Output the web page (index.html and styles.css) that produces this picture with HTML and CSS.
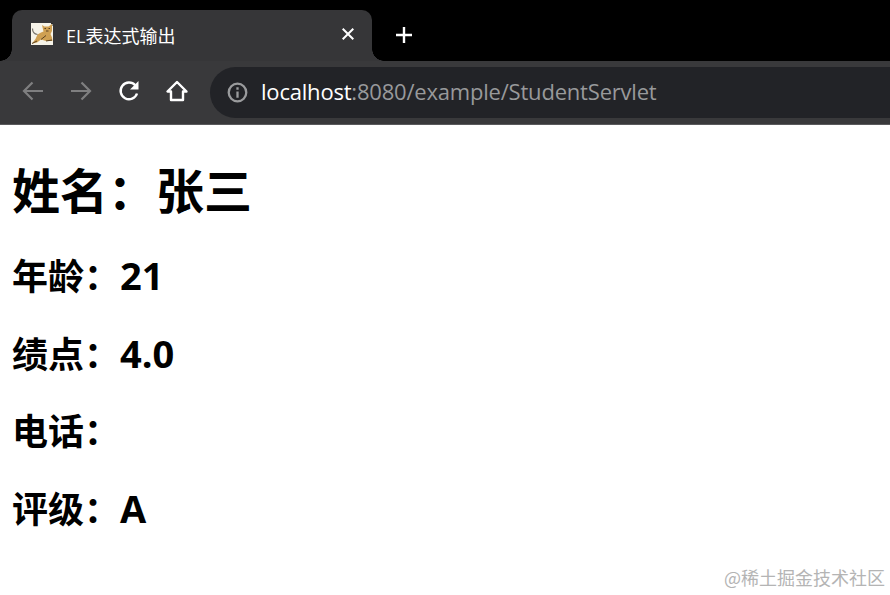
FILE: index.html
```html
<!DOCTYPE html>
<html lang="zh-CN">
<head>
    <meta charset="UTF-8">
    <meta name="viewport" content="width=device-width, initial-scale=1.0">
    <title>EL表达式输出</title>
    <link rel="stylesheet" href="styles.css">
</head>
<body>
    <div class="tab-strip">
        <div class="tab">
            <svg class="favicon" viewBox="0 0 22 22">
                <rect width="22" height="22" fill="#f6f3e8"/>
                <path d="M11 2L13.5 3.5H17.5L21 1V8L19.5 11L21 14.5L21.5 18H15L10 16.5L6 19.5L1 20.5L4.5 16L6.5 11.5L10 9.5L12.5 8.5Z" fill="#cfa052"/>
                <path d="M13.5 5.5h1.5M17.5 5.5h1.5M15 8h2.5M10 16.5l5-4M15 18l6-1M1 20.5l5-2.5" stroke="#5a4120" stroke-width="1" fill="none"/>
                <path d="M6.5 11.5C3 11 1.5 9 1.5 5.5" stroke="#77736a" stroke-width="1.2" fill="none"/>
                <path d="M20 0.5H22V3" stroke="#2a2a2a" stroke-width="1" fill="none"/>
            </svg>
            <span class="tab-title">EL表达式输出</span>
            <svg class="tab-close" viewBox="0 0 12 12">
                <path d="M0.7 0.7L11.3 11.3M11.3 0.7L0.7 11.3" stroke="#fff" stroke-width="2"/>
            </svg>
        </div>
        <svg class="new-tab" viewBox="0 0 18 18">
            <path d="M9 1V17M1 9H17" stroke="#fff" stroke-width="2.4"/>
        </svg>
    </div>

    <div class="toolbar">
        <div class="nav-buttons">
            <svg class="nav-icon" viewBox="0 0 24 24">
                <path d="M22 12H3M11.5 3.5L3 12L11.5 20.5" stroke="#7f7f80" stroke-width="2.2" fill="none"/>
            </svg>
            <svg class="nav-icon" viewBox="0 0 24 24">
                <path d="M2 12H21M12.5 3.5L21 12L12.5 20.5" stroke="#7f7f80" stroke-width="2.2" fill="none"/>
            </svg>
            <svg class="nav-icon" viewBox="0 0 24 24">
                <path d="M20 14.5A8.4 8.4 0 1 1 18.3 6.3" stroke="#fff" stroke-width="2.4" fill="none"/>
                <path d="M21.5 2V10.5H13Z" fill="#fff"/>
            </svg>
            <svg class="nav-icon" viewBox="0 0 24 24">
                <path d="M12 3L2.5 12.5H6V21H18V12.5H21.5Z" stroke="#fff" stroke-width="2.4" stroke-linejoin="round" fill="none"/>
            </svg>
        </div>
        <div class="address-bar">
            <svg class="info-icon" viewBox="0 0 22 22">
                <circle cx="11" cy="11" r="9.2" stroke="#9a9b9d" stroke-width="2.4" fill="none"/>
                <path d="M11 10V16.5M11 5.5V8" stroke="#9a9b9d" stroke-width="2.4" fill="none"/>
            </svg>
            <span class="url"><span class="url-host">localhost</span>:8080/example/StudentServlet</span>
        </div>
    </div>

    <div class="page">
        <h1>姓名：张三</h1>
        <h2>年龄：<span class="value">21</span></h2>
        <h2>绩点：<span class="value">4.0</span></h2>
        <h2>电话：</h2>
        <h2>评级：<span class="value">A</span></h2>
    </div>

    <div class="watermark">@稀土掘金技术社区</div>
</body>
</html>
```

FILE: styles.css
```css
html, body {
    margin: 0;
    height: 100%;
    overflow: hidden;
}

body {
    font-family: "Open Sans", "Noto Sans CJK SC", sans-serif;
    background-color: white;
    color: black;
}

.tab-strip {
    height: 61px;
    background-color: black;
    display: flex;
    align-items: flex-end;
    padding-left: 12px;
    box-sizing: border-box;
}

.tab {
    position: relative;
    width: 360px;
    height: 51px;
    background-color: #363638;
    border-radius: 10px 10px 0 0;
    display: flex;
    align-items: center;
    padding: 0 18px 0 19px;
    box-sizing: border-box;
}

/* concave corners at the foot of the tab */
.tab::before,
.tab::after {
    content: "";
    position: absolute;
    bottom: 0;
    width: 12px;
    height: 12px;
}

.tab::before {
    left: -12px;
    background: radial-gradient(circle at 0 0, black 11.5px, #363638 12px);
}

.tab::after {
    right: -12px;
    background: radial-gradient(circle at 100% 0, black 11.5px, #363638 12px);
}

.favicon {
    width: 22px;
    height: 22px;
    flex-shrink: 0;
    margin-bottom: 3px;
}

.tab-title {
    margin-left: 13px;
    margin-bottom: 1px;
    flex: 1;
    color: #fff;
    font-size: 18px;
}

.tab-close {
    width: 12px;
    height: 12px;
    margin-bottom: 3px;
}

.new-tab {
    width: 18px;
    height: 18px;
    margin: 0 0 17px 23px;
}

.toolbar {
    height: 64px;
    background-color: #39393b;
    border-bottom: 1px solid #5a5a5c;
    box-sizing: border-box;
    display: flex;
    align-items: center;
}

.nav-buttons {
    display: flex;
    gap: 24px;
    padding: 0 0 3px 21px;
    width: 210px;
    box-sizing: border-box;
}

.nav-icon {
    width: 24px;
    height: 24px;
}

.address-bar {
    flex: 1;
    height: 51px;
    margin-top: -1px;
    background-color: #222327;
    border-radius: 26px 0 0 26px;
    display: flex;
    align-items: center;
    padding-left: 17px;
}

.info-icon {
    width: 21px;
    height: 21px;
}

.url {
    margin: 0 0 2px 13px;
    font-size: 22px;
    letter-spacing: -0.2px;
    color: #98999b;
}

.url-host {
    color: #fff;
}

.page {
    padding: 0 12px;
}

h1 {
    margin: 37px 0 0;
    font-size: 48px;
    line-height: 58px;
    font-weight: bold;
}

h2 {
    margin: 0;
    font-size: 36px;
    line-height: 50px;
    padding-top: 27.5px;
    font-weight: bold;
}

h1 + h2 {
    padding-top: 32px;
}

.value {
    font-size: 38px;
    line-height: 1;
}

.watermark {
    position: absolute;
    right: 5px;
    bottom: 5px;
    font-size: 18px;
    color: #b4b4b4;
    font-family: "Noto Sans CJK SC", sans-serif;
    font-weight: 400;
}
```
